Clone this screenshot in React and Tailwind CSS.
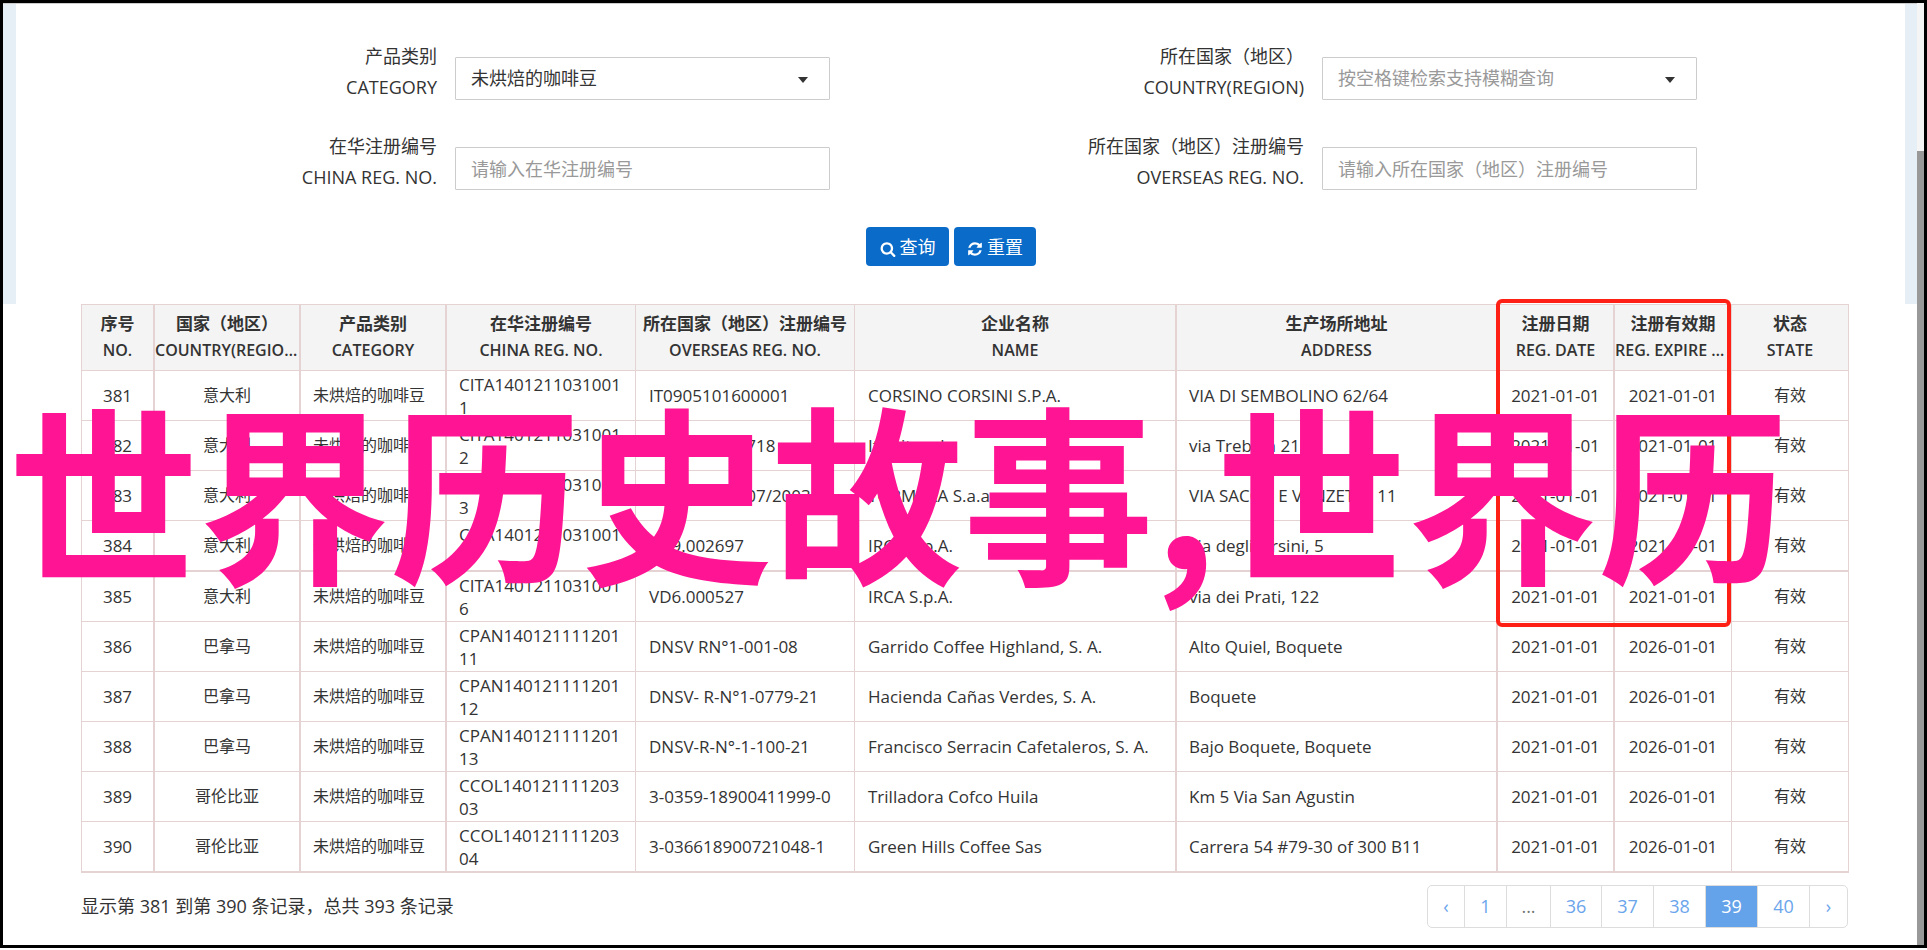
const columns = [
  { zh: '序号', en: 'NO.', col: 'w-[73px]', line: 'border-r-2', cell: 'text-center text-[17px]' },
  { zh: '国家（地区）', en: 'COUNTRY(REGION)', col: 'w-[146px]', line: 'border-r-2', cell: 'text-center text-[16px]' },
  { zh: '产品类别', en: 'CATEGORY', col: 'w-[146px]', line: 'border-r-2', cell: 'px-3 text-[16px]' },
  { zh: '在华注册编号', en: 'CHINA REG. NO.', col: 'w-[189px]', line: 'border-r', cell: 'px-3 text-[17px] break-all' },
  { zh: '所在国家（地区）注册编号', en: 'OVERSEAS REG. NO.', col: 'w-[219px]', line: 'border-r', cell: 'px-[13px] text-[17px]' },
  { zh: '企业名称', en: 'NAME', col: 'w-[322px]', line: 'border-r-2', cell: 'px-[13px] text-[17px]' },
  { zh: '生产场所地址', en: 'ADDRESS', col: 'w-[321px]', line: 'border-r-2', cell: 'px-3 text-[17px]' },
  { zh: '注册日期', en: 'REG. DATE', col: 'w-[117px]', line: 'border-r-2', cell: 'text-center text-[17px]' },
  { zh: '注册有效期', en: 'REG. EXPIRE DATE', col: 'w-[117px]', line: 'border-r', cell: 'text-center text-[17px]' },
  { zh: '状态', en: 'STATE', col: 'w-[117px]', line: 'border-r', cell: 'text-center text-[16px]' },
];

const coffee = '未烘焙的咖啡豆';

const rows = [
  ['381', '意大利', coffee, 'CITA14012110310011', 'IT0905101600001', 'CORSINO CORSINI S.P.A.', 'VIA DI SEMBOLINO 62/64', '2021-01-01', '2021-01-01', '有效'],
  ['382', '意大利', coffee, 'CITA14012110310012', '0000000000718', 'Italvita srl', 'via Trebbia 21', '2021-01-01', '2021-01-01', '有效'],
  ['383', '意大利', coffee, 'CITA14012110310013', '000000000007/2003', 'TORMARA S.a.a', 'VIA SACCO E VANZETTI, 11', '2021-01-01', '2021-01-01', '有效'],
  ['384', '意大利', coffee, 'CITA14012110310015', 'VD9.002697', 'IRCA S.p.A.', 'via degli Orsini, 5', '2021-01-01', '2021-01-01', '有效'],
  ['385', '意大利', coffee, 'CITA14012110310016', 'VD6.000527', 'IRCA S.p.A.', 'via dei Prati, 122', '2021-01-01', '2021-01-01', '有效'],
  ['386', '巴拿马', coffee, 'CPAN14012111120111', 'DNSV RN°1-001-08', 'Garrido Coffee Highland, S. A.', 'Alto Quiel, Boquete', '2021-01-01', '2026-01-01', '有效'],
  ['387', '巴拿马', coffee, 'CPAN14012111120112', 'DNSV- R-N°1-0779-21', 'Hacienda Cañas Verdes, S. A.', 'Boquete', '2021-01-01', '2026-01-01', '有效'],
  ['388', '巴拿马', coffee, 'CPAN14012111120113', 'DNSV-R-N°-1-100-21', 'Francisco Serracin Cafetaleros, S. A.', 'Bajo Boquete, Boquete', '2021-01-01', '2026-01-01', '有效'],
  ['389', '哥伦比亚', coffee, 'CCOL14012111120303', '3-0359-18900411999-0', 'Trilladora Cofco Huila', 'Km 5 Via San Agustin', '2021-01-01', '2026-01-01', '有效'],
  ['390', '哥伦比亚', coffee, 'CCOL14012111120304', '3-036618900721048-1', 'Green Hills Coffee Sas', 'Carrera 54 #79-30 of 300 B11', '2021-01-01', '2026-01-01', '有效'],
];

const heavyRows = ['384', '390'];

const pages = [
  { text: '‹', label: '上一页', width: 'w-[37px]' },
  { text: '1', width: 'w-[42px]' },
  { text: '...', width: 'w-[44px]', gap: true },
  { text: '36', width: 'w-[51px]' },
  { text: '37', width: 'w-[52px]' },
  { text: '38', width: 'w-[52px]' },
  { text: '39', width: 'w-[52px]', active: true },
  { text: '40', width: 'w-[52px]' },
  { text: '›', label: '下一页', width: 'w-[37px]' },
];

const control =
  'block h-[43px] w-full appearance-none rounded-[1px] border border-[#ccc] bg-white px-[15px] text-[18px] outline-none placeholder:text-[#999]';

function SearchIcon() {
  return (
    <svg viewBox="0 0 1792 1792" fill="currentColor" className="mt-[3px] size-4" aria-hidden="true">
      <path d="M1216 832q0-185-131.5-316.5t-316.5-131.5-316.5 131.5-131.5 316.5 131.5 316.5 316.5 131.5 316.5-131.5 131.5-316.5zm512 832q0 52-38 90t-90 38q-54 0-90-38l-343-342q-179 124-399 124-143 0-273.5-55.5t-225-150-150-225-55.5-273.5 55.5-273.5 150-225 225-150 273.5-55.5 273.5 55.5 225 150 150 225 55.5 273.5q0 220-124 399l343 343q37 37 37 90z" />
    </svg>
  );
}

function RefreshIcon() {
  return (
    <svg viewBox="0 0 1792 1792" fill="currentColor" className="mt-[3px] size-4" aria-hidden="true">
      <path d="M1639 1056q0 5-1 7-64 268-268 434.5t-478 166.5q-146 0-282.5-55t-243.5-157l-129 129q-19 19-45 19t-45-19-19-45v-448q0-26 19-45t45-19h448q26 0 45 19t19 45-19 45l-137 137q71 66 161 102t187 36q134 0 250-65t186-179q11-17 53-117 8-23 30-23h192q13 0 22.5 9.5t9.5 22.5zm25-800v448q0 26-19 45t-45 19h-448q-26 0-45-19t-19-45 19-45l138-138q-148-137-349-137-134 0-250 65t-186 179q-11 17-53 117-8 23-30 23h-199q-13 0-22.5-9.5t-9.5-22.5v-7q65-268 270-434.5t480-166.5q146 0 284 55.5t245 156.5l130-129q19-19 45-19t45 19 19 45z" />
    </svg>
  );
}

function Field({ id, zh, en, children }) {
  return (
    <div className="flex gap-[18px]">
      <label htmlFor={id} className="w-[282px] shrink-0 text-right text-[18px] leading-[31px] whitespace-nowrap">
        <span className="block">{zh}</span>
        <span className="block">{en}</span>
      </label>
      <div className="relative mt-4 w-[375px] self-start">{children}</div>
    </div>
  );
}

function Select({ id, tone, text }) {
  return (
    <>
      <select id={id} className={`${control} ${tone}`}>
        <option>{text}</option>
      </select>
      <svg viewBox="0 0 10 6" className="pointer-events-none absolute top-5 right-[22px] h-[6px] w-[10px]">
        <path d="M0 0h10L5 6z" fill="#333" />
      </svg>
    </>
  );
}

function SearchForm() {
  return (
    <form className="flex h-[300px] flex-col border-r-[12px] border-l-[13px] border-[#e6eef6] pt-[37px]">
      <div className="grid grid-cols-[867px_1fr] gap-y-7 pl-[139px]">
        <Field id="category" zh="产品类别" en="CATEGORY">
          <Select id="category" tone="text-[#333]" text="未烘焙的咖啡豆" />
        </Field>
        <Field id="country" zh="所在国家（地区）" en="COUNTRY(REGION)">
          <Select id="country" tone="text-[#999]" text="按空格键检索支持模糊查询" />
        </Field>
        <Field id="china-no" zh="在华注册编号" en="CHINA REG. NO.">
          <input id="china-no" className={control} placeholder="请输入在华注册编号" />
        </Field>
        <Field id="overseas-no" zh="所在国家（地区）注册编号" en="OVERSEAS REG. NO.">
          <input id="overseas-no" className={control} placeholder="请输入所在国家（地区）注册编号" />
        </Field>
      </div>
      <div className="mt-[34px] flex justify-center gap-[5px] pr-[19px] text-[18px] text-white">
        <button type="button" className="flex h-[39px] w-[83px] items-center justify-center gap-1 rounded-[4px] bg-[#0a6bc8] pt-px">
          <SearchIcon />
          查询
        </button>
        <button type="button" className="flex h-[39px] w-[82px] items-center justify-center gap-1 rounded-[4px] bg-[#0a6bc8] pt-px">
          <RefreshIcon />
          重置
        </button>
      </div>
    </form>
  );
}

function Records() {
  return (
    <table className="w-full table-fixed border-separate border-spacing-0 border-t border-l border-[#e5d3d4]">
      <colgroup>
        {columns.map((c) => (
          <col key={c.zh} className={c.col} />
        ))}
      </colgroup>
      <thead>
        <tr className="h-[66px] bg-[#f4f4f4]">
          {columns.map((c) => (
            <th key={c.zh} scope="col" className={`border-b border-[#e5d3d4] p-0 pb-[2px] leading-[26px] ${c.line}`}>
              <span className="block text-[17px] font-bold whitespace-nowrap">{c.zh}</span>
              <span className="block truncate text-[16px] font-semibold">{c.en}</span>
            </th>
          ))}
        </tr>
      </thead>
      <tbody>
        {rows.map((row) => {
          const heavy = heavyRows.includes(row[0]);
          return (
            <tr key={row[0]} className={heavy ? 'h-[51px]' : 'h-[50px]'}>
              {row.map((value, i) => (
                <td
                  key={columns[i].zh}
                  className={`border-[#e5d3d4] py-0 leading-[23px] ${heavy ? 'border-b-2' : 'border-b'} ${columns[i].line} ${columns[i].cell}`}
                >
                  {value}
                </td>
              ))}
            </tr>
          );
        })}
      </tbody>
    </table>
  );
}

function Pagination() {
  return (
    <nav aria-label="分页" className="flex h-[43px] divide-x divide-[#ddd] overflow-hidden rounded-[5px] border border-[#ddd] text-[18px] text-[#6ba5ec]">
      {pages.map((p) =>
        p.gap ? (
          <span key={p.text} className={`flex items-center justify-center text-[#777] ${p.width}`}>
            {p.text}
          </span>
        ) : (
          <a
            key={p.text}
            href="#"
            aria-label={p.label}
            className={`flex items-center justify-center ${p.width} ${p.active ? 'bg-[#64a2ea] text-white' : ''}`}
          >
            {p.text}
          </a>
        ),
      )}
    </nav>
  );
}

export default function App() {
  return (
    <div className="flex min-h-screen flex-col bg-white pb-[2px] font-['Open_Sans','Noto_Sans_CJK_SC',sans-serif] text-[#333]">
      <div className="relative flex flex-1 overflow-hidden border-[3px] border-black">
        <main className="min-w-0 flex-1 border-t border-[#ccc]">
          <SearchForm />
          <div className="pr-[69px] pl-[78px]">
            <div className="relative">
              <Records />
              <div className="pointer-events-none absolute -top-[5px] right-[117px] h-[328px] w-[235px] rounded-[6px] border-4 border-[#ff2015]" />
            </div>
            <div className="mt-3 flex items-center justify-between text-[18px]">
              <p>显示第 381 到第 390 条记录，总共 393 条记录</p>
              <Pagination />
            </div>
          </div>
        </main>
        <div className="flex w-[7px] shrink-0 flex-col bg-[#f5f5f5] pt-[148px]">
          <div className="flex-1 bg-[#999]" />
        </div>
        <p className="pointer-events-none absolute top-[346px] left-[5px] font-['Noto_Sans_CJK_SC',sans-serif] text-[191px] leading-[276px] font-bold whitespace-nowrap text-[#ff1493]">
          世界历史故事,世界历
        </p>
      </div>
    </div>
  );
}
